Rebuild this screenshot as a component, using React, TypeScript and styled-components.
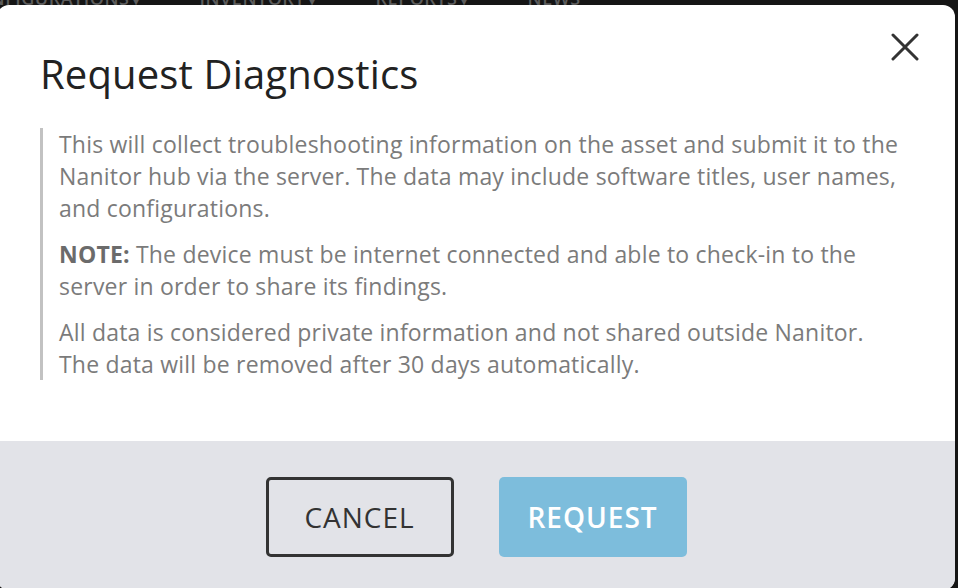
import React from 'react';
import styled, { createGlobalStyle } from 'styled-components';

const GlobalStyle = createGlobalStyle`
  html, body {
    margin: 0;
    padding: 0;
    background-color: #151515;
    font-family: 'Open Sans', 'Noto Sans', Arial, sans-serif;
    overflow: hidden;
  }
`;

const Page = styled.div`
  width: 958px;
  height: 588px;
  overflow: hidden;
  background-color: #151515;
`;

const NavBar = styled.nav`
  height: 5px;
  overflow: hidden;
  display: flex;
  align-items: flex-end;
  gap: 60px;
  margin-left: -36px;
`;

const NavItem = styled.span<{ caret?: boolean }>`
  font-size: 18px;
  font-weight: 600;
  line-height: 1;
  letter-spacing: 0.5px;
  color: #5c5c5c;
  text-transform: uppercase;
  margin-bottom: -2px;
  white-space: nowrap;

  &::after {
    content: ${(p) => (p.caret ? "' ▾'" : "''")};
    font-size: 12px;
  }
`;

const Modal = styled.div`
  position: relative;
  width: 958px;
  height: 585px;
  margin-left: -3px;
  background-color: #ffffff;
  border-radius: 12px;
  overflow: hidden;
  display: flex;
  flex-direction: column;
`;

const Body = styled.div`
  padding: 45px 52px 0 43px;
  height: 436px;
  box-sizing: border-box;
  flex-shrink: 0;
`;

const Title = styled.h2`
  margin: 0 0 30px;
  font-size: 40px;
  font-weight: 400;
  line-height: 48px;
  letter-spacing: 0.15px;
  color: #222222;
`;

const CloseButton = styled.button`
  position: absolute;
  top: 24px;
  right: 32px;
  width: 36px;
  height: 36px;
  padding: 0;
  border: none;
  background: none;
  display: flex;
  align-items: center;
  justify-content: center;
  cursor: pointer;
`;

const Quote = styled.div`
  border-left: 3px solid #c2c2c2;
  padding-left: 16px;
`;

const Para = styled.p`
  margin: 0 0 14px;
  font-size: 23px;
  line-height: 32px;
  letter-spacing: 0.2px;
  color: #7b7b7b;

  &:last-child {
    margin-bottom: 0;
  }

  strong {
    font-weight: 700;
    color: #6b6b6b;
  }
`;

const Footer = styled.div`
  flex: 1;
  background-color: #e2e3e8;
  display: flex;
  justify-content: center;
  align-items: flex-start;
  gap: 45px;
  padding-top: 36px;
`;

const Button = styled.button<{ primary?: boolean }>`
  width: 188px;
  height: 80px;
  box-sizing: border-box;
  border-radius: 5px;
  font-family: 'Open Sans', 'Noto Sans', Arial, sans-serif;
  font-size: 28px;
  letter-spacing: 1px;
  text-transform: uppercase;
  cursor: pointer;
  border: ${(p) => (p.primary ? 'none' : '3px solid #333333')};
  background-color: ${(p) => (p.primary ? '#7dbddc' : 'transparent')};
  color: ${(p) => (p.primary ? '#ffffff' : '#333333')};
  font-weight: ${(p) => (p.primary ? 600 : 400)};
`;

export default function App() {
  return (
    <Page>
      <GlobalStyle />
      <NavBar>
        <NavItem caret>Configurations</NavItem>
        <NavItem caret>Inventory</NavItem>
        <NavItem caret>Reports</NavItem>
        <NavItem>News</NavItem>
      </NavBar>
      <Modal>
        <CloseButton aria-label="Close">
          <svg width="28" height="28" viewBox="0 0 28 28">
            <path
              d="M2 2 L26 26 M26 2 L2 26"
              stroke="#333333"
              strokeWidth="3"
              strokeLinecap="round"
            />
          </svg>
        </CloseButton>
        <Body>
          <Title>Request Diagnostics</Title>
          <Quote>
            <Para>
              This will collect troubleshooting information on the asset and submit it to the
              Nanitor hub via the server. The data may include software titles, user names,
              and configurations.
            </Para>
            <Para>
              <strong>NOTE:</strong> The device must be internet connected and able to check-in
              to the server in order to share its findings.
            </Para>
            <Para>
              All data is considered private information and not shared outside Nanitor. The
              data will be removed after 30 days automatically.
            </Para>
          </Quote>
        </Body>
        <Footer>
          <Button>Cancel</Button>
          <Button primary>Request</Button>
        </Footer>
      </Modal>
    </Page>
  );
}
